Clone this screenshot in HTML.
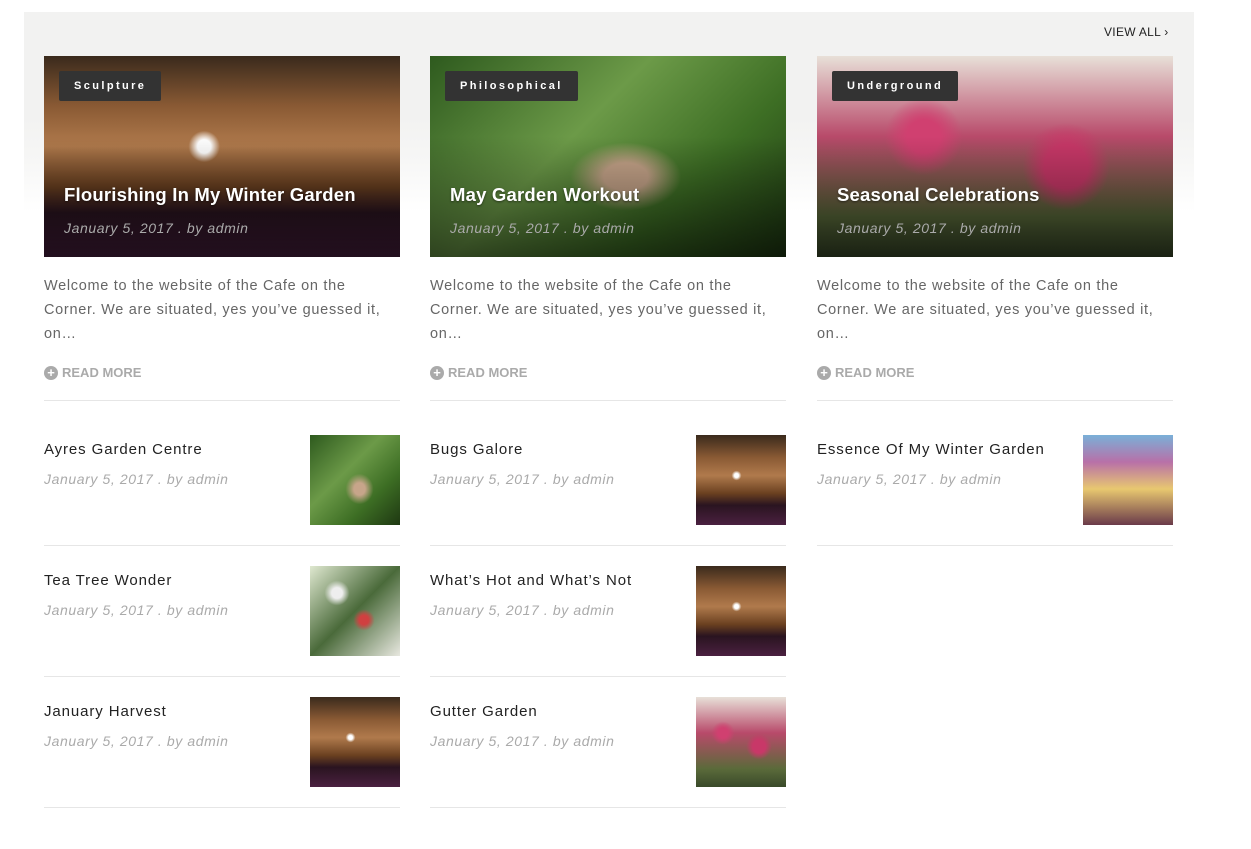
<!DOCTYPE html>
<html><head><style>
body{margin:0;background:#fff;width:1251px;height:849px;position:relative;overflow:hidden;font-family:"Liberation Sans",sans-serif}
.band{position:absolute;left:24px;top:12px;width:1170px;height:200px;background:linear-gradient(#f2f2f1 0,#f2f2f1 105px,#f7f7f6 150px,#fff 200px)}
.va{position:absolute;left:1104px;top:25px;font-size:12px;color:#222;letter-spacing:.3px}
.card{position:absolute;top:56px;width:356px}
.img{height:201px;position:relative;overflow:hidden}
.tag{position:absolute;left:15px;top:15px;background:#333;color:#fff;font-size:11px;font-weight:bold;letter-spacing:2.4px;padding:9px 15px 9px 15px;border-radius:2px}
.t{position:absolute;left:20px;top:128px;color:#fff;font-size:18.5px;font-weight:bold;letter-spacing:.2px;text-shadow:0 1px 2px rgba(0,0,0,.5)}
.d{position:absolute;left:20px;top:164px;color:#aaa;font-size:14px;font-style:italic;letter-spacing:.6px}
.ex{margin-top:17px;font-size:14.5px;line-height:24px;color:#666;letter-spacing:.7px;white-space:nowrap}
.rm{margin-top:19px;font-size:13px;color:#aaa;font-weight:bold;display:flex;align-items:center;gap:4px}
.rm i{width:14px;height:14px;border-radius:50%;background:#aaa;color:#fff;font-style:normal;font-size:13px;line-height:14px;text-align:center}
.hr{border-top:1px solid #e6e6e6;margin-top:20px}
.item{position:absolute;width:356px;height:131px;border-bottom:1px solid #e6e6e6}
.item .it{position:absolute;left:0;top:6px;font-size:15px;color:#222;letter-spacing:.9px}
.item .id{position:absolute;left:0;top:36px;font-size:14px;color:#aaa;font-style:italic;letter-spacing:.6px}
.item .th{position:absolute;right:0;top:0;width:90px;height:90px}
.wood{background:radial-gradient(circle at 45% 45%,#fff 3%,transparent 7%),linear-gradient(#3a2a1c 0%,#8a5a34 25%,#b07a4c 45%,#6a4020 65%,#2a1420 78%,#4a2040 100%)}
.grn{background:radial-gradient(ellipse at 55% 60%,#c7a58a 8%,transparent 20%),linear-gradient(135deg,#2e5a1e,#6c9a48 40%,#3d6e24 70%,#1e3812)}
.pink{background:radial-gradient(circle at 30% 40%,#d04070 6%,transparent 14%),radial-gradient(circle at 70% 55%,#c83868 8%,transparent 16%),linear-gradient(#e8e0d8 0%,#b84a6a 40%,#5a6a3a 80%,#3a4a2a)}
.flw{background:radial-gradient(circle at 30% 30%,#eee 6%,transparent 14%),radial-gradient(circle at 60% 60%,#d04040 6%,transparent 14%),linear-gradient(135deg,#dfe8d0,#4a6a3a 50%,#e8e8e0)}
.house{background:linear-gradient(#7ab0d8 0%,#b870a8 30%,#e8c870 60%,#6a3a4a 100%)}
.ov{position:absolute;inset:0;background:linear-gradient(rgba(0,0,0,0) 40%,rgba(0,0,0,.55) 100%)}
</style></head><body>
<div class="band"></div>
<div class="va">VIEW ALL ›</div>

<div class="card" style="left:44px"><div class="img wood"><div class="ov"></div><div class="tag">Sculpture</div><div class="t">Flourishing In My Winter Garden</div><div class="d">January 5, 2017 . by admin</div></div>
<div class="ex">Welcome to the website of the Cafe on the<br>Corner. We are situated, yes you’ve guessed it,<br>on…</div><div class="rm"><i>+</i>READ MORE</div><div class="hr"></div></div>

<div class="card" style="left:430px"><div class="img grn"><div class="ov"></div><div class="tag">Philosophical</div><div class="t">May Garden Workout</div><div class="d">January 5, 2017 . by admin</div></div>
<div class="ex">Welcome to the website of the Cafe on the<br>Corner. We are situated, yes you’ve guessed it,<br>on…</div><div class="rm"><i>+</i>READ MORE</div><div class="hr"></div></div>

<div class="card" style="left:817px"><div class="img pink"><div class="ov"></div><div class="tag">Underground</div><div class="t">Seasonal Celebrations</div><div class="d">January 5, 2017 . by admin</div></div>
<div class="ex">Welcome to the website of the Cafe on the<br>Corner. We are situated, yes you’ve guessed it,<br>on…</div><div class="rm"><i>+</i>READ MORE</div><div class="hr"></div></div>

<div class="item" style="left:44px;top:435px;height:110px"><div class="it">Ayres Garden Centre</div><div class="id">January 5, 2017 . by admin</div><div class="th grn"></div></div>
<div class="item" style="left:430px;top:435px;height:110px"><div class="it">Bugs Galore</div><div class="id">January 5, 2017 . by admin</div><div class="th wood"></div></div>
<div class="item" style="left:817px;top:435px;height:110px"><div class="it">Essence Of My Winter Garden</div><div class="id">January 5, 2017 . by admin</div><div class="th house"></div></div>

<div class="item" style="left:44px;top:566px;height:110px"><div class="it">Tea Tree Wonder</div><div class="id">January 5, 2017 . by admin</div><div class="th flw"></div></div>
<div class="item" style="left:430px;top:566px;height:110px"><div class="it">What’s Hot and What’s Not</div><div class="id">January 5, 2017 . by admin</div><div class="th wood"></div></div>

<div class="item" style="left:44px;top:697px;height:110px"><div class="it">January Harvest</div><div class="id">January 5, 2017 . by admin</div><div class="th wood"></div></div>
<div class="item" style="left:430px;top:697px;height:110px"><div class="it">Gutter Garden</div><div class="id">January 5, 2017 . by admin</div><div class="th pink"></div></div>
</body></html>
